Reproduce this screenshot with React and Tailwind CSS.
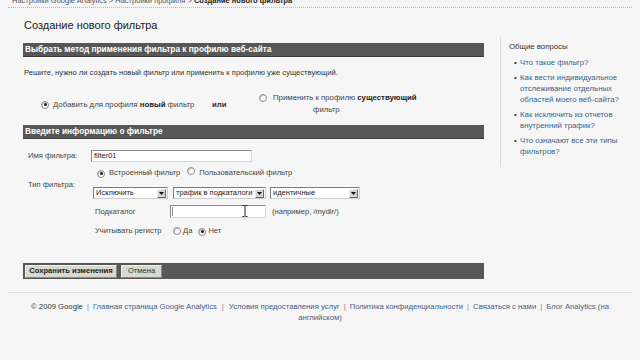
import React from "react";

const Radio = ({ checked }) => (
  <span className="inline-flex w-[8px] h-[8px] rounded-full border border-[#8c8c8c] bg-white items-center justify-center shrink-0 shadow-[inset_1px_1px_0_#c8c8c8]">
    {checked && <span className="block w-[3px] h-[3px] rounded-full bg-[#1a1a1a]" />}
  </span>
);

const Select = ({ className, text }) => (
  <div className={"flex items-center h-[12px] bg-white border border-t-[#7a7a7a] border-l-[#7a7a7a] border-b-[#cfcfcf] border-r-[#cfcfcf] " + className}>
    <span className="flex-1 pl-[2px] text-[7.5px] leading-[10px] text-[#222] whitespace-nowrap overflow-hidden">{text}</span>
    <span className="flex items-center justify-center w-[9px] h-[9px] mr-[1px] bg-[#d6d3cb] border border-t-[#f4f4f4] border-l-[#f4f4f4] border-b-[#6a6a6a] border-r-[#6a6a6a]">
      <svg width="5" height="3" viewBox="0 0 5 3"><path d="M0 0H5L2.5 3Z" fill="#111" /></svg>
    </span>
  </div>
);

export default function App() {
  return (
    <div className="w-[640px] h-[360px] overflow-hidden bg-[#f6f6f6] text-[#333] font-['Liberation_Sans',Arial,sans-serif]">
      {/* breadcrumb */}
      <div className="pl-[12px] mt-[-4px] text-[7.5px] leading-[10px] text-[#555] whitespace-nowrap">
        Настройки Google Analytics &gt; Настройки профиля &gt; <b className="text-[#222]">Создание нового фильтра</b>
      </div>
      <div className="mx-[8px] mt-[1px] border-b border-dotted border-[#bbb]" />

      <div className="flex items-start pl-[23px]">
        {/* left column */}
        <div className="w-[461px] flex flex-col">
          <div className="mt-[10px] text-[11px] leading-[14px] text-[#222] pl-[1px]">Создание нового фильтра</div>

          <div className="mt-[11px] h-[14px] bg-[#575757] border-b border-[#3e3e3e] flex items-center pl-[2px] text-[8.3px] font-bold text-white whitespace-nowrap">
            Выбрать метод применения фильтра к профилю веб-сайта
          </div>

          <div className="mt-[11px] pl-[1px] text-[7.6px] leading-[10px] text-[#333] whitespace-nowrap">
            Решите, нужно ли создать новый фильтр или применить к профилю уже существующий.
          </div>

          <div className="mt-[14px] h-[24px] flex items-center text-[7.8px] leading-[12px] text-[#444]">
            <div className="ml-[18px] w-[160px] flex items-center gap-[4px] whitespace-nowrap mt-[1px]">
              <Radio checked />
              <span>Добавить для профиля <b className="text-[#222]">новый</b> фильтр</span>
            </div>
            <div className="ml-[11px] w-[47px] font-bold text-[#333] mt-[2px]">или</div>
            <div className="flex items-start gap-[6px] whitespace-nowrap mt-[-1px]">
              <span className="mt-[2px]"><Radio /></span>
              <div className="flex flex-col">
                <span>Применить к профилю <b className="text-[#222]">существующий</b></span>
                <span className="pl-[40px]">фильтр</span>
              </div>
            </div>
          </div>

          <div className="mt-[9px] h-[14px] bg-[#575757] border-b border-[#3e3e3e] flex items-center pl-[2px] text-[8.3px] font-bold text-white whitespace-nowrap">
            Введите информацию о фильтре
          </div>

          {/* form */}
          <div className="flex flex-col text-[7.6px] leading-[12px] text-[#444]">
            <div className="mt-[11px] flex items-center">
              <div className="pl-[5px] w-[68px]">Имя фильтра:</div>
              <div className="w-[161px] h-[12px] bg-white border border-t-[#8a8a8a] border-l-[#8a8a8a] border-b-[#d8d8d8] border-r-[#d8d8d8] flex items-center pl-[2px] text-[7.5px] text-[#222]">
                filter01
              </div>
            </div>

            <div className="mt-[5px] flex items-center">
              <div className="pl-[5px] w-[70px] mt-[3px]">Тип фильтра:</div>
              <div className="flex flex-col">
                <div className="h-[12px] flex items-center whitespace-nowrap">
                  <span className="ml-[4px]"><Radio checked /></span>
                  <span className="ml-[4px]">Встроенный фильтр</span>
                  <span className="ml-[7px]"><Radio /></span>
                  <span className="ml-[4px]">Пользовательский фильтр</span>
                </div>
                <div className="mt-[8px] flex items-center">
                  <Select className="w-[75px]" text="Исключить" />
                  <Select className="w-[93px] ml-[5px]" text="трафик в подкаталоги" />
                  <Select className="w-[90px] ml-[4px]" text="идентичные" />
                </div>
              </div>
            </div>

            <div className="ml-[72px] mt-[6px] flex items-center whitespace-nowrap">
              <span className="w-[75px]">Подкаталог</span>
              <div className="relative w-[96px] h-[13px] bg-white border border-t-[#8a8a8a] border-l-[#8a8a8a] border-b-[#d8d8d8] border-r-[#d8d8d8]">
                <span className="absolute left-[1px] top-[1px] w-[1px] h-[9px] bg-[#888]" />
                <svg className="absolute left-[71px] top-[-1px]" width="6" height="12" viewBox="0 0 6 12">
                  <path d="M0.5 0.5H2.5M3.5 0.5H5.5M3 1V11M0.5 11.5H2.5M3.5 11.5H5.5" stroke="#222" strokeWidth="1" fill="none" />
                </svg>
              </div>
              <span className="ml-[6px]">(например, /mydir/)</span>
            </div>
            <div className="ml-[72px] mt-[7px] flex items-center whitespace-nowrap">
              <span className="w-[78px]">Учитывать регистр</span>
              <Radio />
              <span className="ml-[2px]">Да</span>
              <span className="ml-[6px]"><Radio checked /></span>
              <span className="ml-[2px]">Нет</span>
            </div>
          </div>

          <div className="mt-[26px] h-[16px] bg-[#575757] flex items-center pl-[2px] gap-[4px]">
            <div className="h-[13px] w-[92px] flex items-center justify-center bg-[#d9d8cd] border border-t-[#f2f2ee] border-l-[#f2f2ee] border-b-[#8a8a80] border-r-[#8a8a80] text-[7.6px] font-bold text-[#222] whitespace-nowrap">
              Сохранить изменения
            </div>
            <div className="h-[13px] w-[41px] flex items-center justify-center bg-[#d9d8cd] border border-t-[#f2f2ee] border-l-[#f2f2ee] border-b-[#8a8a80] border-r-[#8a8a80] text-[7.6px] text-[#333] whitespace-nowrap">
              Отмена
            </div>
          </div>
        </div>

        {/* sidebar */}
        <div className="ml-[16px] mt-[29px] w-[130px] border-l border-[#dcdcdc] pl-[8px] pt-[5px] pb-[10px] text-[7.8px] leading-[10px]">
          <div className="text-[#333] whitespace-nowrap">Общие вопросы</div>
          <ul className="mt-[5px] flex flex-col gap-[4px] text-[#3d5f8e] leading-[11px]">
            <li className="flex whitespace-nowrap pl-[5px]"><span className="w-[6px] text-[#333]">•</span><span>Что такое фильтр?</span></li>
            <li className="flex whitespace-nowrap pl-[5px]"><span className="w-[6px] text-[#333]">•</span><span>Как вести индивидуальное<br />отслеживание отдельных<br />областей моего веб-сайта?</span></li>
            <li className="flex whitespace-nowrap pl-[5px]"><span className="w-[6px] text-[#333]">•</span><span>Как исключить из отчетов<br />внутренний трафик?</span></li>
            <li className="flex whitespace-nowrap pl-[5px]"><span className="w-[6px] text-[#333]">•</span><span>Что означают все эти типы<br />фильтров?</span></li>
          </ul>
        </div>
      </div>

      {/* footer */}
      <div className="mx-[8px] mt-[13px] border-t border-[#e0e0e0] pt-[8px] text-center text-[7.7px] leading-[11px] text-[#3d5f8e] whitespace-nowrap">
        <span className="text-[#333]">© 2009 Google</span>
        <span className="text-[#888] mx-[4px]">|</span>
        <span>Главная страница Google Analytics</span>
        <span className="text-[#888] mx-[5px]">|</span>
        <span>Условия предоставления услуг</span>
        <span className="text-[#888] mx-[4px]">|</span>
        <span>Политика конфиденциальности</span>
        <span className="text-[#888] mx-[4px]">|</span>
        <span>Связаться с нами</span>
        <span className="text-[#888] mx-[4px]">|</span>
        <span>Блог Analytics (на</span>
        <br />
        <span>английском)</span>
      </div>
    </div>
  );
}
